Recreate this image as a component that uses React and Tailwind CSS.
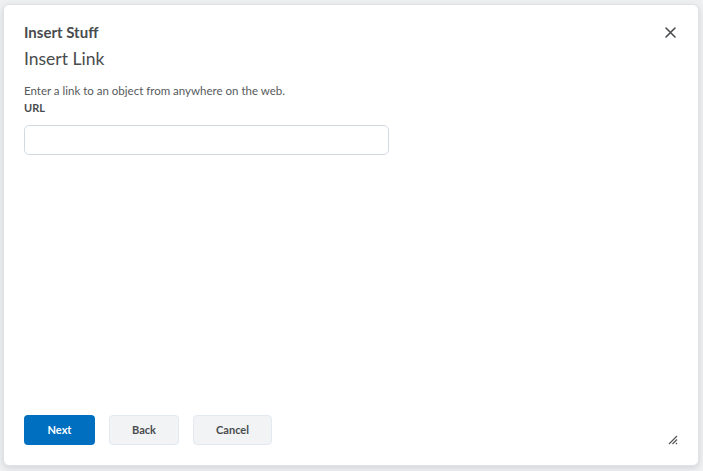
export default function App() {
  return (
    <div className="h-[471px] w-[703px] bg-[#eef0f2] pt-[4px] pl-[3px] pr-[4px] pb-[5px] font-['Lato','Liberation_Sans',sans-serif] text-[#494c4e]">
      <div className="relative flex h-full flex-col rounded-[6px] border border-[#dfe3e8] bg-white px-[20px] shadow-[0_2px_6px_rgba(0,0,0,0.12)]">
        <div className="flex items-start justify-between pt-[18px]">
          <h1 className="text-[15px] font-bold leading-[18px]">Insert Stuff</h1>
          <button className="mr-[2px] mt-[4px] text-[#494c4e]" aria-label="Close">
            <svg width="11" height="11" viewBox="0 0 11 11" stroke="currentColor" strokeWidth="1.6" strokeLinecap="round">
              <path d="M1 1l9 9M10 1l-9 9" />
            </svg>
          </button>
        </div>
        <h2 className="mt-[7px] text-[17.5px] leading-[22px]">Insert Link</h2>
        <p className="mt-[14px] text-[11.5px] leading-[14px] text-[#565a5c]">Enter a link to an object from anywhere on the web.</p>
        <label className="mt-[3px] text-[11px] font-bold leading-[14px]">URL</label>
        <input
          type="text"
          className="mt-[10px] h-[30px] w-[365px] rounded-[5px] border border-[#d3d9e3] px-2 text-[12px] outline-none"
        />
        <div className="flex-1" />
        <div className="flex gap-[14px] pb-[20px]">
          <button className="h-[30px] w-[71px] rounded-[4px] bg-[#006fbf] text-[11px] font-bold text-white">Next</button>
          <button className="h-[30px] w-[70px] rounded-[4px] border border-[#e3e9f1] bg-[#f1f3f5] text-[11px] font-bold text-[#494c4e]">Back</button>
          <button className="h-[30px] w-[79px] rounded-[4px] border border-[#e3e9f1] bg-[#f1f3f5] text-[11px] font-bold text-[#494c4e]">Cancel</button>
        </div>
        <svg className="absolute bottom-[20px] right-[20px]" width="10" height="10" viewBox="0 0 10 10" stroke="#555" strokeWidth="1.2">
          <path d="M1 9L9 1M4.5 9L9 4.5M8 9L9 8" />
        </svg>
      </div>
    </div>
  );
}
